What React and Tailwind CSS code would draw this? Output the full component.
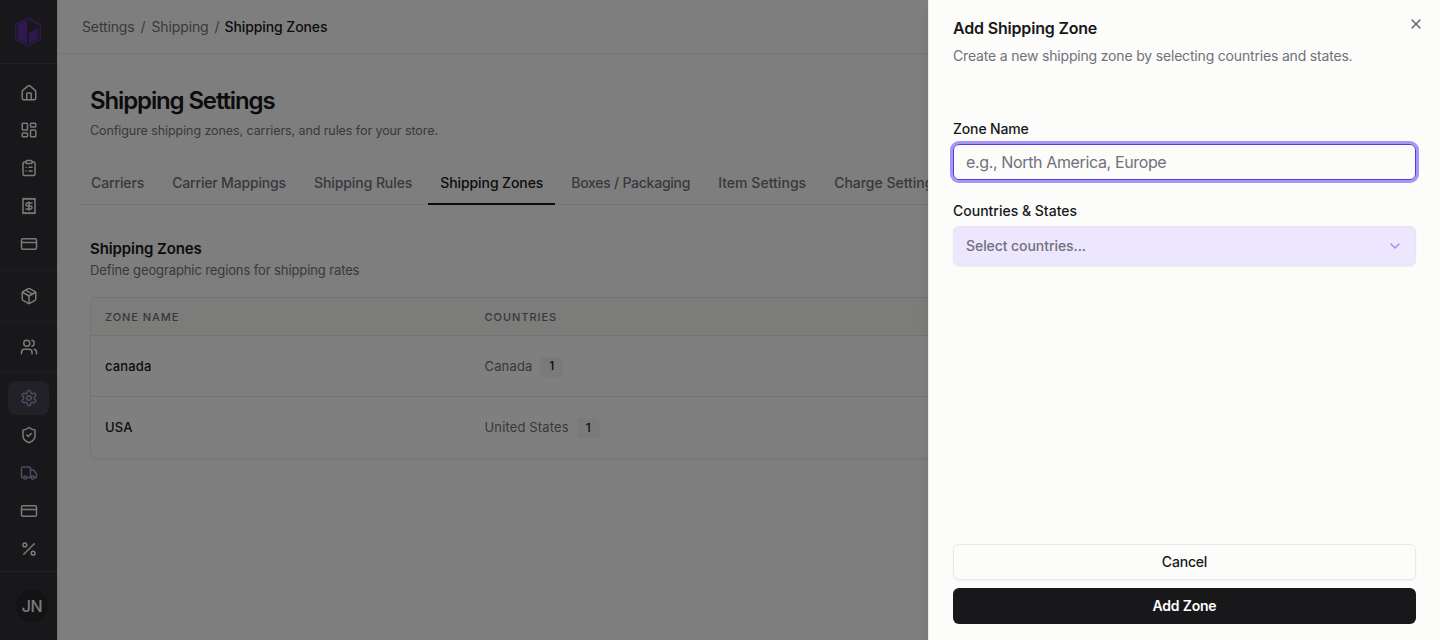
import React from 'react';
import {
  ChevronDown,
  ClipboardList,
  CreditCard,
  House,
  LayoutDashboard,
  Package,
  Percent,
  Receipt,
  Settings,
  ShieldCheck,
  Truck,
  Users,
  X,
} from 'lucide-react';

const navGroups = [
  {
    className: 'pt-[11.7px] pb-[9.3px]',
    items: [{ icon: House }, { icon: LayoutDashboard }, { icon: ClipboardList }, { icon: Receipt }, { icon: CreditCard }],
  },
  { className: 'py-2', items: [{ icon: Package }] },
  { className: 'py-2', items: [{ icon: Users }] },
  {
    className: 'pt-[7.7px]',
    items: [
      { icon: Settings, active: true },
      { icon: ShieldCheck },
      { icon: Truck, current: true },
      { icon: CreditCard },
      { icon: Percent },
    ],
  },
];

const tabs = [
  { label: 'Carriers', tracking: 'tracking-[-0.12px]' },
  { label: 'Carrier Mappings', tracking: 'tracking-[-0.17px]' },
  { label: 'Shipping Rules', tracking: 'tracking-[-0.08px]' },
  { label: 'Shipping Zones', tracking: 'tracking-[-0.09px]', active: true },
  { label: 'Boxes / Packaging', tracking: 'tracking-[-0.26px]' },
  { label: 'Item Settings', tracking: 'tracking-[0.03px]' },
  { label: 'Charge Settings', tracking: 'tracking-[-0.02px]' },
];

const zones = [
  { name: 'canada', country: 'Canada', count: 1 },
  { name: 'USA', country: 'United States', count: 1 },
];

const Logo = () => (
  <svg width="28" height="32" viewBox="0 0 28 32" fill="none">
    <path d="M14 2L26.3 8.8v14.4L14 30L1.7 23.2V8.8z" stroke="#5f309f" strokeWidth="1.5" />
    <path d="M13 4.5v23L3.8 22.8V9.3z" fill="#5f309f" />
    <path d="M14.8 16.7l9-5v11.1l-9 4.7z" fill="#5f309f" />
  </svg>
);

const NavItem = ({ icon: Icon, active, current }) => (
  <a
    className={`flex h-[34px] w-[41px] items-center justify-center rounded-lg ${
      active ? 'bg-[#45434f] text-[#a294c0]' : current ? 'text-[#a294c0]' : 'text-[#f4f4f5]'
    }`}
  >
    <Icon size={18} strokeWidth={2} />
  </a>
);

const Sidebar = () => (
  <aside className="flex w-[57px] shrink-0 flex-col bg-[#303034]">
    <div className="flex h-16 items-center border-b border-[#414146] pl-3.5">
      <Logo />
    </div>
    <nav className="flex flex-1 flex-col">
      {navGroups.map((group, i) => (
        <div
          key={i}
          className={`flex flex-col items-center gap-[3.75px] border-[#3e3e43] ${i > 0 ? 'border-t' : ''} ${group.className}`}
        >
          {group.items.map((item, j) => (
            <NavItem key={j} {...item} />
          ))}
        </div>
      ))}
    </nav>
    <div className="flex h-[69px] items-center border-t border-[#414146] pl-4">
      <div className="flex size-8 items-center justify-center rounded-full bg-[#27272a] text-base font-medium tracking-[-0.3px] text-[#f4f4f5]">
        JN
      </div>
    </div>
  </aside>
);

const ZonesTable = () => (
  <div className="w-[1317px] overflow-hidden rounded-md border border-[#e9e9e7] bg-white shadow-xs">
    <div className="flex h-[38px] items-center border-b border-[#e6e6e4] bg-[#f8f8f5] px-3.5 pt-0.5 text-[11px] font-medium tracking-[0.95px] text-[#71717a]">
      <div className="w-[379.5px]">ZONE NAME</div>
      <div>COUNTRIES</div>
    </div>
    {zones.map((zone) => (
      <div
        key={zone.name}
        className="flex h-[61px] items-center border-b border-[#e6e6e4] px-3.5 pt-px text-[13px] tracking-[0.15px] last:border-b-0"
      >
        <div className="w-[379.5px] font-medium text-[#18181b]">{zone.name}</div>
        <div className="flex items-center gap-2 text-[#71717a]">
          {zone.country}
          <span className="flex h-5 w-[23px] items-center justify-center rounded-[2px] rounded-tr-md bg-[#f5f5f2] pb-px text-xs font-medium text-[#18181b]">
            {zone.count}
          </span>
        </div>
      </div>
    ))}
  </div>
);

const ShippingSettings = () => (
  <main className="min-w-0 flex-1 overflow-hidden border-l border-[#f0f0f0] bg-[#fdfdfd]">
    <header className="flex h-[54px] items-center gap-1.5 border-b border-[#ebebeb] pl-6 text-sm tracking-[-0.13px] text-[#71717a]">
      <span>Settings</span>
      <span>/</span>
      <span>Shipping</span>
      <span>/</span>
      <span className="-ml-px font-medium tracking-[-0.09px] text-[#18181b]">Shipping Zones</span>
    </header>

    <div className="pt-[31px] pl-8">
      <h1 className="text-2xl leading-8 font-semibold tracking-[-1.13px] text-[#18181b]">Shipping Settings</h1>
      <p className="mt-1 text-[12.5px] leading-5 tracking-[-0.08px] text-[#71717a]">
        Configure shipping zones, carriers, and rules for your store.
      </p>
    </div>

    {/* Tabs */}
    <div className="mt-[22px] ml-[21px] flex h-[42px] gap-1 border-b border-[#ebebeb]">
      {tabs.map((tab) => (
        <button
          key={tab.label}
          className={`-mb-px shrink-0 border-b-2 px-3 text-sm font-medium ${tab.tracking} ${
            tab.active ? 'border-[#18181b] text-[#18181b]' : 'border-transparent text-[#71717a]'
          }`}
        >
          {tab.label}
        </button>
      ))}
    </div>

    <section className="pt-8 pl-8">
      <h2 className="text-[15px] leading-6 font-semibold tracking-[-0.1px] text-[#18181b]">Shipping Zones</h2>
      <p className="-mt-px mb-[17px] text-[13px] leading-5 tracking-[-0.11px] text-[#71717a]">
        Define geographic regions for shipping rates
      </p>
      <ZonesTable />
    </section>
  </main>
);

const AddZoneSheet = () => (
  <div className="absolute inset-y-0 right-0 flex w-[512px] flex-col border-l border-[#e9e9e7] bg-[#fcfcfa] px-6 py-4 shadow-lg">
    <div className="flex items-start justify-between">
      <div>
        <h2 className="text-base leading-6 font-semibold tracking-[-0.18px] text-[#18181b]">Add Shipping Zone</h2>
        <p className="mt-1.5 text-sm leading-5 tracking-[-0.18px] text-[#71717a]">
          Create a new shipping zone by selecting countries and states.
        </p>
      </div>
      <button className="-mr-2 text-[#626265]">
        <X size={16} />
      </button>
    </div>

    <div className="mt-14 flex flex-1 flex-col text-sm font-medium text-[#18181b]">
      <label className="leading-[14px] tracking-[-0.15px]">Zone Name</label>
      <input
        className="mt-2 h-9 rounded-md border border-[#5b35e0] px-3 text-base font-normal tracking-[-0.36px] ring-[3px] ring-[#a995f5] outline-none placeholder:text-[#71717a]"
        placeholder="e.g., North America, Europe"
      />
      <label className="mt-6 leading-[14px]">Countries &amp; States</label>
      <button className="mt-2 flex h-10 items-center justify-between rounded-md border border-[#e8e6ec] bg-[#ece6fe] px-3 tracking-[-0.07px] text-[#71717a] shadow-xs">
        Select countries...
        <ChevronDown size={16} className="text-[#a08bf0]" />
      </button>
    </div>

    <div className="flex flex-col gap-2 text-sm font-medium tracking-[-0.2px]">
      <button className="h-9 rounded-md border border-[#e9e9e7] bg-[#fcfcfa] text-[#18181b] shadow-xs">Cancel</button>
      <button className="h-9 rounded-md bg-[#18181b] font-semibold text-white">Add Zone</button>
    </div>
  </div>
);

const App = () => (
  <div className="relative flex h-screen overflow-hidden bg-white font-[Inter,sans-serif] antialiased">
    <Sidebar />
    <ShippingSettings />
    <div className="absolute inset-0 bg-black/50" />
    <AddZoneSheet />
  </div>
);

export default App;
